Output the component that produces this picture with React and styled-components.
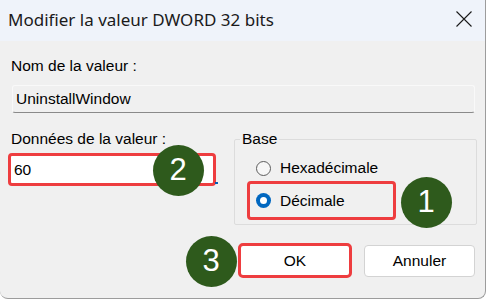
import React from "react";
import styled, { createGlobalStyle } from "styled-components";

const GlobalStyle = createGlobalStyle`
  html, body {
    margin: 0;
    padding: 0;
    background: #ffffff;
  }
  body {
    font-family: "Liberation Sans", Arial, sans-serif;
    font-size: 15.5px;
    color: #000;
  }
`;

const Window = styled.div`
  position: relative;
  width: 486px;
  height: 299px;
  box-sizing: border-box;
  background: #f0f0f0;
  border-right: 1px solid #9c9c9c;
  border-bottom: 1px solid #9c9c9c;
  border-radius: 0 0 8px 8px;
  overflow: hidden;
  display: flex;
  flex-direction: column;
`;

const TitleBar = styled.div`
  height: 41px;
  flex-shrink: 0;
  background: #eff3fa;
  display: flex;
  align-items: center;
  justify-content: space-between;
  padding: 0 13px 3px 8px;
  box-sizing: border-box;
`;

const Title = styled.div`
  font-family: "Noto Sans", "Open Sans", sans-serif;
  font-size: 17px;
  color: #1a1a1a;
`;

const Close = styled.svg`
  width: 16px;
  height: 16px;
`;

const Body = styled.div`
  padding: 16px 10px 0 11px;
  display: flex;
  flex-direction: column;
`;

const Label = styled.div`
  line-height: 18px;
  height: 18px;
`;

const ReadOnlyField = styled.div`
  margin: 10px 0 0 1px;
  height: 28px;
  box-sizing: border-box;
  border: 1px solid #f9f9f9;
  border-bottom-color: #8a8a8a;
  border-radius: 3px;
  background: #f0f0f0;
  display: flex;
  align-items: center;
  padding-left: 3px;
`;

const Row = styled.div`
  margin-top: 17px;
  display: flex;
  gap: 18px;
`;

const LeftCol = styled.div`
  width: 205px;
  display: flex;
  flex-direction: column;
`;

const EditField = styled.div`
  position: relative;
  margin: 5px 0 0 -3px;
  width: 208px;
  height: 33px;
  box-sizing: border-box;
  border: 3px solid #ee3d3f;
  border-radius: 4px;
  background: #ffffff;
  display: flex;
  align-items: center;
  padding-left: 3px;

  &::after {
    content: "";
    position: absolute;
    right: -5px;
    bottom: -1px;
    width: 3px;
    height: 2px;
    background: #005fb8;
  }
`;

const Group = styled.fieldset`
  margin: 0 -2px 0 0;
  flex: 1;
  border: 1px solid #dcdcdc;
  border-radius: 2px;
  padding: 5px 0 4px 12px;
  min-width: 0;
`;

const Legend = styled.legend`
  margin-left: -7px;
  padding: 0 2px;
  line-height: 18px;
`;

const Option = styled.div`
  display: flex;
  align-items: center;
  gap: 9px;
  box-sizing: border-box;
  width: 149px;
  height: ${(p) => (p.$marked ? "39px" : "30px")};
  margin-top: ${(p) => (p.$marked ? "-2px" : "0")};
  border: 3px solid ${(p) => (p.$marked ? "#ee3d3f" : "transparent")};
  border-radius: 4px;
  padding-left: 6px;
  position: relative;
  z-index: ${(p) => (p.$marked ? 1 : 0)};
`;

const Radio = styled.span`
  width: 15px;
  height: 15px;
  box-sizing: border-box;
  border-radius: 50%;
  flex-shrink: 0;
  display: flex;
  align-items: center;
  justify-content: center;
  border: ${(p) => (p.$checked ? "none" : "1px solid #5d5d5d")};
  background: ${(p) => (p.$checked ? "#0067c0" : "#f7f7f7")};

  &::after {
    content: "";
    display: ${(p) => (p.$checked ? "block" : "none")};
    width: 7px;
    height: 7px;
    border-radius: 50%;
    background: #ffffff;
  }
`;

const Buttons = styled.div`
  margin-top: 18px;
  display: flex;
  justify-content: flex-end;
  align-items: center;
  gap: 12px;
`;

const Button = styled.div`
  box-sizing: border-box;
  width: ${(p) => (p.$marked ? "114px" : "111px")};
  height: ${(p) => (p.$marked ? "35px" : "32px")};
  border: ${(p) => (p.$marked ? "3px solid #ee3d3f" : "1px solid #d3d3d3")};
  border-radius: ${(p) => (p.$marked ? "5px" : "4px")};
  background: #ffffff;
  display: flex;
  align-items: center;
  justify-content: center;
`;

const Badge = styled.div`
  position: absolute;
  width: 51px;
  height: 51px;
  border-radius: 50%;
  background: #2e5a1c;
  color: #ffffff;
  font-size: 31px;
  display: flex;
  align-items: center;
  justify-content: center;
  z-index: 5;
`;

const badges = [
  { n: 2, x: 178, y: 170 },
  { n: 1, x: 426, y: 202 },
  { n: 3, x: 211, y: 261 },
];

export default function App() {
  return (
    <>
      <GlobalStyle />
      <Window>
        <TitleBar>
          <Title>Modifier la valeur DWORD 32 bits</Title>
          <Close viewBox="0 0 16 16">
            <path d="M0.5 0.5 L15.5 15.5 M15.5 0.5 L0.5 15.5" stroke="#1a1a1a" strokeWidth="1.1" />
          </Close>
        </TitleBar>
        <Body>
          <Label>Nom de la valeur :</Label>
          <ReadOnlyField>UninstallWindow</ReadOnlyField>
          <Row>
            <LeftCol>
              <Label>Données de la valeur :</Label>
              <EditField>60</EditField>
            </LeftCol>
            <Group>
              <Legend>Base</Legend>
              <Option>
                <Radio />
                Hexadécimale
              </Option>
              <Option $marked>
                <Radio $checked />
                Décimale
              </Option>
            </Group>
          </Row>
          <Buttons>
            <Button $marked>OK</Button>
            <Button>Annuler</Button>
          </Buttons>
        </Body>
        {badges.map((b) => (
          <Badge key={b.n} style={{ left: b.x - 25.5, top: b.y - 25.5 }}>
            {b.n}
          </Badge>
        ))}
      </Window>
    </>
  );
}
